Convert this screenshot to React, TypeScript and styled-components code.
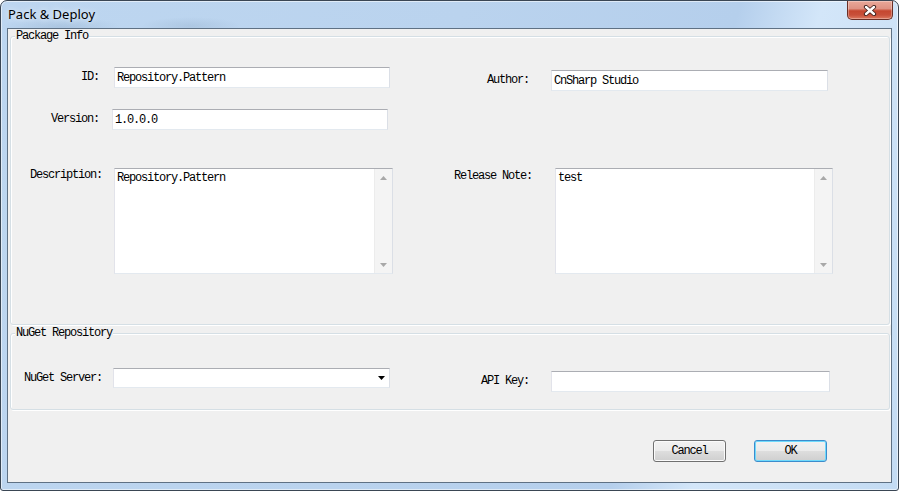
import React from "react";
import styled, { createGlobalStyle, css } from "styled-components";

const Global = createGlobalStyle`
  html, body { margin: 0; padding: 0; background: #ffffff; }
  body { width: 899px; height: 491px; overflow: hidden; }
  #root { width: 899px; height: 491px; }
`;

const MONO = `"Liberation Mono", "Courier New", monospace`;

const monoText = css`
  font-family: ${MONO};
  font-size: 12px;
  letter-spacing: -1.2px;
  color: #000;
`;

const Window = styled.div`
  box-sizing: border-box;
  width: 899px;
  height: 491px;
  border: 1px solid #3a4654;
  border-radius: 7px 7px 3px 3px;
  overflow: hidden;
  display: flex;
  flex-direction: column;
  background:
    radial-gradient(ellipse 60px 10px at 60px 26px, rgba(120, 150, 180, 0.25), transparent),
    radial-gradient(ellipse 50px 9px at 190px 25px, rgba(120, 150, 180, 0.22), transparent),
    linear-gradient(105deg, #bdd6f0 0%, #bad3ee 45%, #b5cfec 72%, #d3e6f9 80%, #cfe3f7 86%, #c3dbf3 100%);
  box-shadow: inset 0 0 0 1px rgba(255, 255, 255, 0.55);
`;

const TitleBar = styled.div`
  flex: none;
  height: 27px;
  display: flex;
  align-items: flex-start;
  justify-content: space-between;
  padding: 0 5px 0 7px;
`;

const Title = styled.div`
  margin-top: 5px;
  font-family: "Noto Sans", "Open Sans", sans-serif;
  font-size: 13px;
  line-height: 17px;
  color: #000;
  text-shadow: 0 0 6px rgba(255, 255, 255, 0.9);
`;

const CloseButton = styled.div`
  box-sizing: border-box;
  width: 46px;
  height: 19px;
  display: flex;
  align-items: center;
  justify-content: center;
  border: 1px solid #6a2f26;
  border-top: none;
  border-radius: 0 0 5px 5px;
  background: linear-gradient(#e9a899 0%, #de9283 42%, #c5472f 55%, #c8503a 78%, #dd7a60 100%);
  box-shadow: inset 0 0 0 1px rgba(255, 255, 255, 0.3);
`;

const Client = styled.div`
  flex: 1;
  margin: 0 6px 7px;
  border: 1px solid #5f7184;
  background: #f0f0f0;
  display: flex;
  flex-direction: column;
`;

const Group = styled.fieldset`
  margin: 0 1px 0 2px;
  padding: 0;
  min-width: 0;
  border: 1px solid #d5dfe5;
  border-radius: 3px;
  box-shadow: inset 1px 1px 0 #ffffff, 1px 1px 0 #ffffff;

  & + & {
    margin-top: 1px;
  }
`;

const Legend = styled.legend`
  ${monoText};
  margin-left: 4px;
  padding: 0 1px;
  line-height: 14px;
  background: #f0f0f0;
`;

const Form = styled.div<{ $pt: number; $pb: number }>`
  padding: ${(p) => p.$pt}px 0 ${(p) => p.$pb}px;
`;

const Row = styled.div<{ $h: number }>`
  display: grid;
  grid-template-columns: 101px 300px 139px 1fr;
  align-items: start;
  height: ${(p) => p.$h}px;
`;

const Label = styled.div<{ $pr: number; $lh: number; $dy?: number }>`
  ${monoText};
  text-align: right;
  white-space: nowrap;
  padding-right: ${(p) => p.$pr}px;
  line-height: ${(p) => p.$lh}px;
  margin-top: ${(p) => p.$dy ?? 0}px;
`;

const fieldBorder = css`
  box-sizing: border-box;
  border: 1px solid;
  border-color: #abadb3 #dbdfe6 #e3e9ef #e2e3ea;
  background: #ffffff;
`;

const TextBox = styled.input<{ $w: number; $dx?: number; $dy?: number }>`
  ${fieldBorder};
  ${monoText};
  width: ${(p) => p.$w}px;
  height: 21px;
  margin: ${(p) => p.$dy ?? 0}px 0 0 ${(p) => p.$dx ?? 0}px;
  padding: 0 2px;
  outline: none;
`;

const Memo = styled.div<{ $w: number; $dx?: number }>`
  ${fieldBorder};
  width: ${(p) => p.$w}px;
  height: 106px;
  margin-left: ${(p) => p.$dx ?? 0}px;
  display: flex;
`;

const MemoText = styled.div`
  ${monoText};
  flex: 1;
  padding: 2px 2px;
  line-height: 14px;
`;

const ScrollTrack = styled.div`
  width: 17px;
  flex: none;
  background: #f4f4f4;
  border-left: 1px solid #ececec;
  display: flex;
  flex-direction: column;
  justify-content: space-between;
`;

const ScrollArrow = styled.div`
  height: 17px;
  display: flex;
  align-items: center;
  justify-content: center;
`;

const Combo = styled.div<{ $w: number; $dx?: number }>`
  ${fieldBorder};
  width: ${(p) => p.$w}px;
  height: 20px;
  margin-left: ${(p) => p.$dx ?? 0}px;
  display: flex;
  align-items: center;
  justify-content: flex-end;
  padding-right: 4px;
`;

const ButtonBar = styled.div`
  display: flex;
  justify-content: flex-end;
  gap: 28px;
  padding: 30px 64px 0 0;
`;

const Button = styled.button<{ $default?: boolean }>`
  ${monoText};
  box-sizing: border-box;
  width: 73px;
  height: 22px;
  padding: 0;
  line-height: 20px;
  border: 1px solid #707070;
  border-radius: 3px;
  background: linear-gradient(#f2f2f2 0%, #ebebeb 48%, #dddddd 52%, #cfcfcf 100%);
  box-shadow: inset 0 0 0 1px #fbfbfb;
  ${(p) =>
    p.$default &&
    css`
      border-color: #3c8ccc;
      box-shadow: inset 0 0 0 1px #6fdafc;
    `}
`;

const CloseGlyph = () => (
  <svg width="14" height="11" viewBox="0 0 14 11">
    <g strokeLinecap="round">
      <line x1="3" y1="2" x2="11" y2="9" stroke="#3d1f1b" strokeWidth="4.2" />
      <line x1="11" y1="2" x2="3" y2="9" stroke="#3d1f1b" strokeWidth="4.2" />
      <line x1="3" y1="2" x2="11" y2="9" stroke="#ffffff" strokeWidth="2.4" />
      <line x1="11" y1="2" x2="3" y2="9" stroke="#ffffff" strokeWidth="2.4" />
    </g>
  </svg>
);

const Tri = ({ up, color }: { up?: boolean; color: string }) => (
  <svg width="7" height="4" viewBox="0 0 7 4">
    <polygon points={up ? "0,4 7,4 3.5,0" : "0,0 7,0 3.5,4"} fill={color} />
  </svg>
);

const MemoBox = ({ text, w, dx }: { text: string; w: number; dx?: number }) => (
  <Memo $w={w} $dx={dx}>
    <MemoText>{text}</MemoText>
    <ScrollTrack>
      <ScrollArrow>
        <Tri up color="#a8a8a8" />
      </ScrollArrow>
      <ScrollArrow>
        <Tri color="#a8a8a8" />
      </ScrollArrow>
    </ScrollTrack>
  </Memo>
);

export default function App() {
  return (
    <>
      <Global />
      <Window>
        <TitleBar>
          <Title>Pack &amp; Deploy</Title>
          <CloseButton>
            <CloseGlyph />
          </CloseButton>
        </TitleBar>
        <Client>
          <Group>
            <Legend>Package Info</Legend>
            <Form $pt={24} $pb={50}>
              <Row $h={42}>
                <Label $pr={13} $lh={21}>ID:</Label>
                <TextBox readOnly $w={276} $dx={2} value="Repository.Pattern" />
                <Label $pr={22} $lh={21} $dy={3}>Author:</Label>
                <TextBox readOnly $w={277} $dy={3} value="CnSharp Studio" />
              </Row>
              <Row $h={59}>
                <Label $pr={13} $lh={21}>Version:</Label>
                <TextBox readOnly $w={276} value="1.0.0.0" />
              </Row>
              <Row $h={106}>
                <Label $pr={10} $lh={14}>Description:</Label>
                <MemoBox text="Repository.Pattern" w={279} dx={2} />
                <Label $pr={19} $lh={14} $dy={1}>Release Note:</Label>
                <MemoBox text="test" w={278} dx={4} />
              </Row>
            </Form>
          </Group>
          <Group>
            <Legend>NuGet Repository</Legend>
            <Form $pt={28} $pb={17}>
              <Row $h={24}>
                <Label $pr={10} $lh={20}>NuGet Server:</Label>
                <Combo $w={277} $dx={1}>
                  <Tri color="#000000" />
                </Combo>
                <Label $pr={22} $lh={21} $dy={3}>API Key:</Label>
                <TextBox readOnly $w={279} $dy={3} value="" />
              </Row>
            </Form>
          </Group>
          <ButtonBar>
            <Button>Cancel</Button>
            <Button $default>OK</Button>
          </ButtonBar>
        </Client>
      </Window>
    </>
  );
}
